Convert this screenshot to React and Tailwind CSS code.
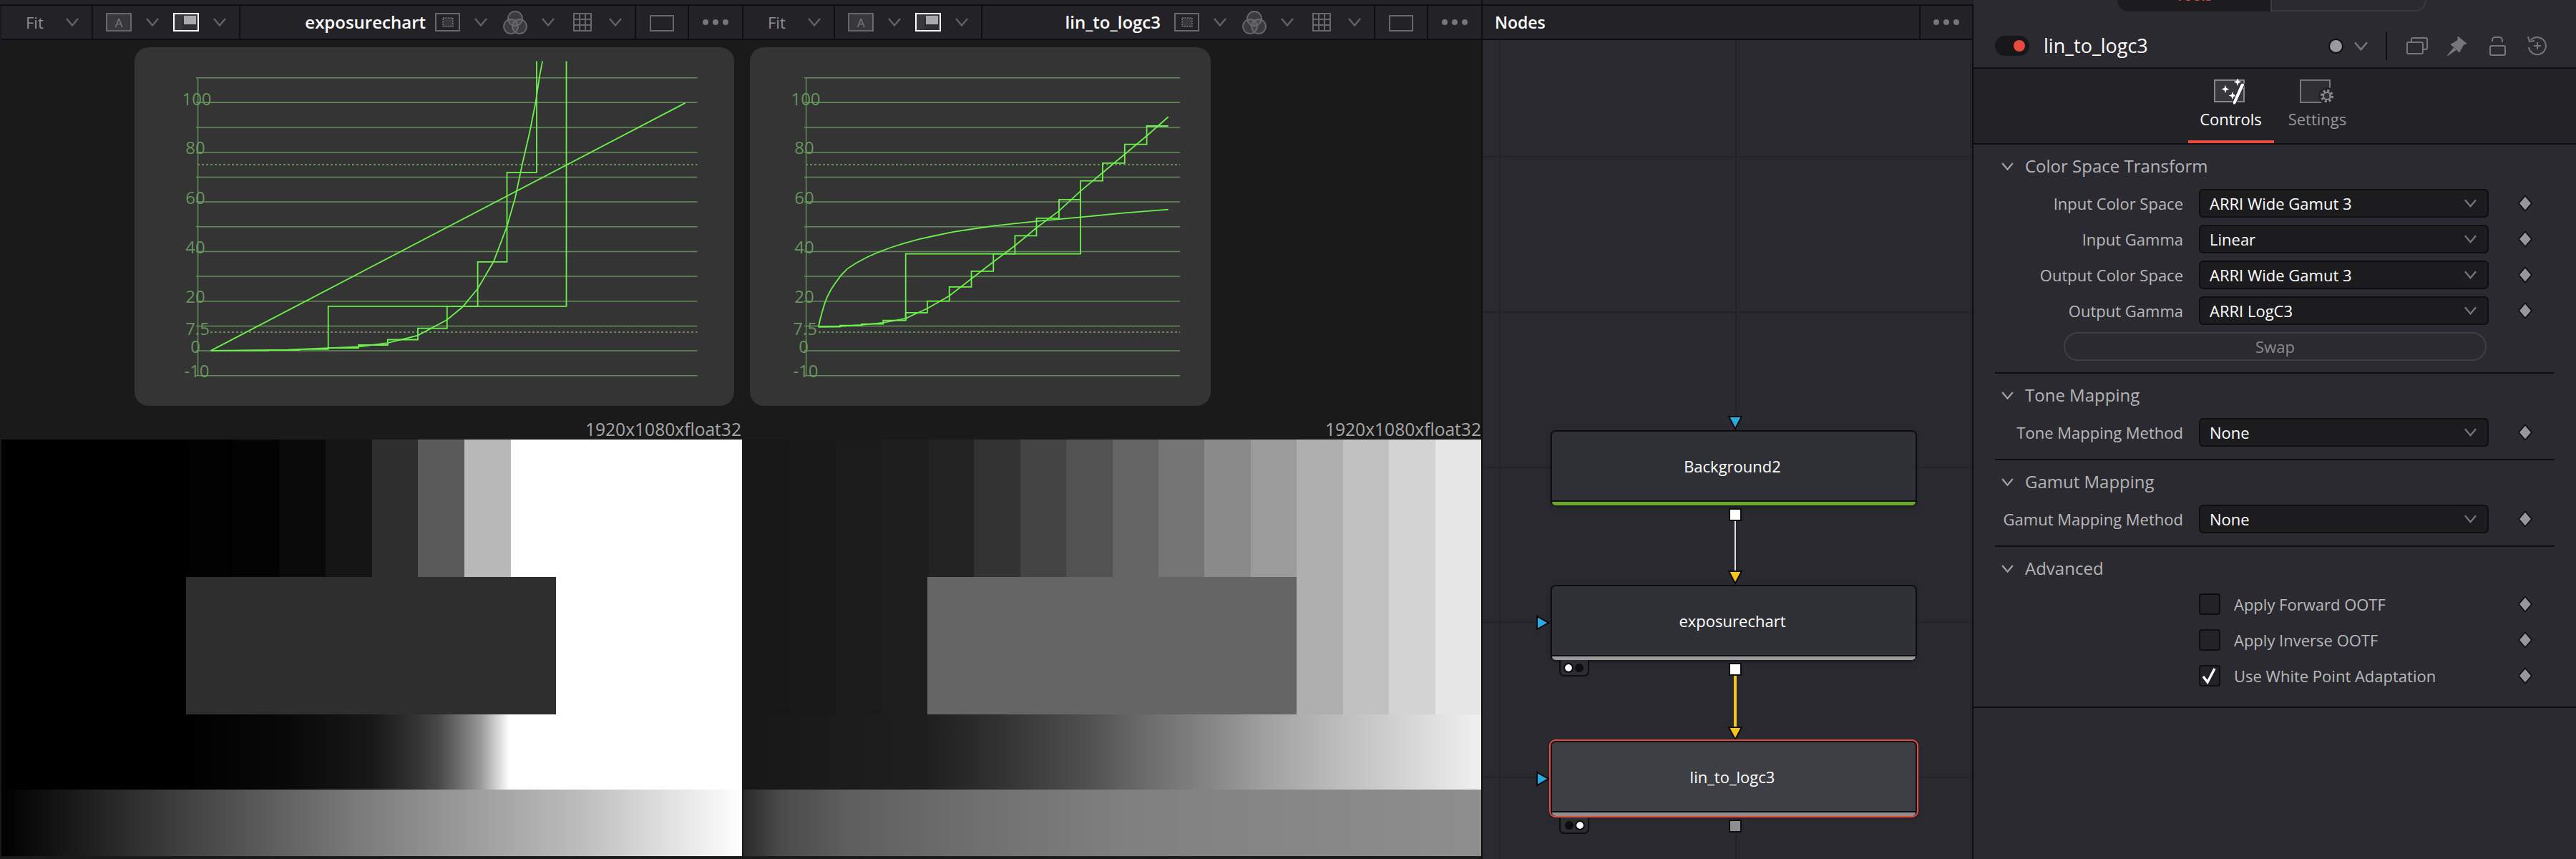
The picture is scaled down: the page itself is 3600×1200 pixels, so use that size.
import React from "react";

// scope traces are read off the chart at 1050px -> 1568px horizontal, 620px -> 1568px vertical
const sx = (x, offset = 0) => x / 1.4933 + offset;
const sy = (y) => y / 2.529;
const toPoints = (list, offset) =>
  list.map(([x, y]) => `${sx(x, offset).toFixed(1)},${sy(y).toFixed(1)}`).join(" ");

const GRID_YS = Array.from({ length: 13 }, (_, k) => 108.7 + k * 34.67);

const EXPOSURE_TRACES = [
  [[440, 1239], [1430, 364]],
  [[440, 1239], [560, 1239], [560, 1237], [625, 1237], [625, 1234], [685, 1234], [685, 1229], [748, 1229], [748, 1219], [809, 1219], [809, 1200], [872, 1200], [872, 1160], [933, 1160], [933, 1082], [997, 1082], [997, 925], [1058, 925], [1058, 609], [1120, 609], [1120, 216]],
  [[685, 1234], [685, 1082], [1182, 1082], [1182, 216]],
  [[440, 1239], [600, 1236], [748, 1225], [809, 1212], [872, 1185], [933, 1130], [965, 1085], [997, 1020], [1030, 925], [1058, 800], [1075, 700], [1090, 580], [1105, 470], [1118, 360], [1126, 270], [1132, 216]],
];

const LOGC_TRACES = [
  [[170, 1155], [215, 1153], [260, 1148], [305, 1140], [352, 1125], [397, 1090], [443, 1045], [489, 985], [535, 925], [580, 868], [625, 805], [672, 745], [717, 675], [763, 610], [809, 545], [855, 480], [900, 413]],
  [[170, 1155], [215, 1155], [215, 1150], [260, 1150], [260, 1145], [305, 1145], [305, 1132], [352, 1132], [352, 1105], [397, 1105], [397, 1064], [443, 1064], [443, 1014], [489, 1014], [489, 958], [535, 958], [535, 897], [580, 897], [580, 833], [625, 833], [625, 771], [672, 771], [672, 705], [717, 705], [717, 639], [763, 639], [763, 576], [809, 576], [809, 510], [855, 510], [855, 445], [900, 445]],
  [[352, 1132], [352, 897], [717, 897], [717, 705]],
  [[170, 1155], [174, 1125], [178, 1100], [183, 1072], [188, 1050], [196, 1023], [205, 1000], [217, 973], [230, 950], [248, 930], [270, 910], [295, 891], [320, 875], [350, 859], [380, 845], [415, 832], [450, 820], [495, 808], [540, 797], [625, 782], [717, 767], [810, 752], [900, 740]],
];

const EXPOSURE_LABELS = [
  ["100", 275, 138], ["80", 273, 206], ["60", 273, 276], ["40", 273, 345], ["20", 273, 414],
  ["7.5", 276, 459], ["0", 273, 484], ["-10", 275, 518],
];

const LOGC_LABELS = [
  ["100", 1126, 138], ["80", 1124, 206], ["60", 1124, 276], ["40", 1124, 345], ["20", 1124, 414],
  ["7.5", 1125, 459], ["0", 1123, 484], ["-10", 1126, 518],
];

const EXPOSURE_STRIPS = [
  "bg-[#000000]", "bg-[#000000]", "bg-[#000000]", "bg-[#000000]", "bg-[#010101]", "bg-[#030303]",
  "bg-[#0a0a0a]", "bg-[#151515]", "bg-[#2e2e2e]", "bg-[#5a5a5a]", "bg-[#b9b9b9]", "bg-white",
  "bg-white", "bg-white", "bg-white", "bg-white",
];

const LOGC_STRIPS = [
  "bg-[#171717]", "bg-[#191919]", "bg-[#1b1b1b]", "bg-[#1e1e1e]", "bg-[#222222]", "bg-[#333333]",
  "bg-[#434343]", "bg-[#525252]", "bg-[#646464]", "bg-[#757575]", "bg-[#8a8a8a]", "bg-[#9b9b9b]",
  "bg-[#afafaf]", "bg-[#c1c1c1]", "bg-[#d3d3d3]", "bg-[#e6e6e6]",
];

function Chevron({ className = "w-[18px] h-[12px]", color = "#626266" }) {
  return (
    <svg viewBox="0 0 18 12" className={className} fill="none" stroke={color} strokeWidth="2.4">
      <polyline points="1,1 9,10.5 17,1" />
    </svg>
  );
}

function Dots() {
  return (
    <div className="flex gap-[6px]">
      <div className="w-[8px] h-[8px] rounded-full bg-[#77777b]" />
      <div className="w-[8px] h-[8px] rounded-full bg-[#77777b]" />
      <div className="w-[8px] h-[8px] rounded-full bg-[#77777b]" />
    </div>
  );
}

function ViewerToolbar({ title, titleGap }) {
  return (
    <div className="h-[46px] flex bg-[#222227] text-[#8f8f92]">
      <div className="w-[128px] shrink-0 border-r-2 border-[#0e0e10] flex items-center pl-[34px]">
        <span className="text-[22px] w-[56px]">Fit</span>
        <Chevron />
      </div>
      <div className="w-[206px] shrink-0 border-r-2 border-[#0e0e10] flex items-center pl-[18px]">
        <div className="w-[36px] h-[26px] border-2 border-[#68686c] bg-[#38383c] flex items-center justify-center text-[17px] leading-none text-[#7c7c80]">
          A
        </div>
        <div className="ml-[20px]">
          <Chevron />
        </div>
        <div className="ml-[20px] w-[36px] h-[26px] border-2 border-white bg-[#3a3a3e] relative">
          <div className="absolute right-0 bottom-0 w-[22px] h-[16px] bg-[#2f2f34]" />
          <div className="absolute right-[2px] top-[2px] w-[17px] h-[12px] bg-[#a9a9ab]" />
        </div>
        <div className="ml-[20px]">
          <Chevron />
        </div>
      </div>
      <div className="flex-1 flex items-center justify-end min-w-0" style={{ paddingRight: titleGap }}>
        <span className="text-[24px] font-semibold text-white">{title}</span>
      </div>
      <div className="w-[429px] shrink-0 flex items-center">
        <div className="w-[281px] shrink-0 border-r-2 border-[#0e0e10] h-full flex items-center">
          <svg viewBox="0 0 35 26" className="w-[35px] h-[26px]" fill="none">
            <rect x="1" y="1" width="33" height="24" stroke="#68686c" strokeWidth="2" />
            <rect x="11" y="7" width="14" height="12" fill="#38383c" stroke="#77777b" strokeWidth="1.5" strokeDasharray="2 1.5" />
          </svg>
          <div className="ml-[20px]">
            <Chevron />
          </div>
          <svg viewBox="0 0 34 33" className="ml-[22px] w-[34px] h-[33px]" fill="#68686c" fillOpacity="0.35" stroke="#68686c" strokeWidth="1.8">
            <circle cx="17" cy="11" r="10" />
            <circle cx="11" cy="22" r="10" />
            <circle cx="23" cy="22" r="10" />
          </svg>
          <div className="ml-[20px]">
            <Chevron />
          </div>
          <svg viewBox="0 0 26 26" className="ml-[26px] w-[26px] h-[26px]" fill="none" stroke="#68686c" strokeWidth="2">
            <rect x="1" y="1" width="24" height="24" />
            <line x1="9" y1="1" x2="9" y2="25" />
            <line x1="17" y1="1" x2="17" y2="25" />
            <line x1="1" y1="9" x2="25" y2="9" />
            <line x1="1" y1="17" x2="25" y2="17" />
          </svg>
          <div className="ml-[24px]">
            <Chevron />
          </div>
        </div>
        <div className="w-[74px] shrink-0 border-r-2 border-[#0e0e10] h-full flex items-center justify-center">
          <div className="w-[34px] h-[23px] border-2 border-[#68686c] mt-[2px]" />
        </div>
        <div className="flex-1 flex items-center justify-center">
          <Dots />
        </div>
      </div>
    </div>
  );
}

function Scope({ viewBox, lineFrom, lineTo, lowerDotFrom, labels, traces, offset }) {
  return (
    <svg viewBox={viewBox} className="w-full h-full">
      {GRID_YS.map((y) => (
        <line key={y} x1={lineFrom} x2={lineTo} y1={y} y2={y} stroke="#648f5b" strokeWidth="1.5" />
      ))}
      <line x1={lineFrom + 2.6} x2={lineFrom + 2.6} y1={108} y2={525} stroke="#648f5b" strokeWidth="1.5" />
      <line x1={lineFrom + 2} x2={lineTo} y1={230} y2={230} stroke="#648f5b" strokeWidth="2" strokeDasharray="3 3" />
      <line x1={lowerDotFrom} x2={lineTo} y1={464} y2={464} stroke="#648f5b" strokeWidth="2" strokeDasharray="3 3" />
      {labels.map(([text, x, y]) => (
        <text key={text} x={x} y={y + 9} textAnchor="middle" fontSize="24" fill="#6b9b62" fillOpacity="0.95">
          {text}
        </text>
      ))}
      {traces.map((trace, i) => (
        <polyline key={i} points={toPoints(trace, offset)} fill="none" stroke="#6cf04c" strokeWidth="1.8" />
      ))}
    </svg>
  );
}

function GrayImage({ strips, boxLeft, boxWidth, boxClass, middleClass, bottomClass }) {
  return (
    <div className="flex flex-col">
      <div className="relative h-[384px] flex">
        {strips.map((c, i) => (
          <div key={i} className={`flex-1 ${c}`} />
        ))}
        <div className={`absolute top-[192px] h-[192px] ${boxLeft} ${boxWidth} ${boxClass}`} />
      </div>
      <div className={`h-[105px] ${middleClass}`} />
      <div className={`h-[93px] ${bottomClass}`} />
    </div>
  );
}

function Triangle({ dir, color, className }) {
  const points = dir === "down" ? "2,2 20,2 11,19" : "2,2 2,20 18,11";
  const box = dir === "down" ? "0 0 22 21" : "0 0 20 22";
  return (
    <svg viewBox={box} className={className}>
      <polygon points={points} fill={color} stroke="#0b0b0d" strokeWidth="2" strokeLinejoin="miter" />
    </svg>
  );
}

function FlowNode({ label, top, stripe, bg = "bg-[#2f3036]", selected }) {
  return (
    <div
      className={`absolute left-[95px] w-[512px] h-[105px] rounded-[7px] border-2 border-b-0 border-[#0e0e10] ${bg} flex flex-col shadow-[0_2px_4px_rgba(0,0,0,0.4)] ${top} ${
        selected ? "outline-2 outline-offset-[0px] outline-[#e64b3d]" : ""
      }`}
    >
      <div className="flex-1 flex items-center justify-center text-[22px] text-white">
        <span className="-translate-x-[2px]">{label}</span>
      </div>
      <div className={`h-[7px] border-t-2 border-[#0e0e10] rounded-b-[5px] ${stripe}`} />
    </div>
  );
}

function NodeBadge({ top, whiteFirst }) {
  const white = <div className="w-[10px] h-[10px] rounded-full bg-white outline-2 outline-[#0e0e10]" />;
  const black = <div className="w-[12px] h-[12px] rounded-full bg-[#0e0e10]" />;
  return (
    <div
      className={`absolute left-[107px] w-[42px] h-[23px] rounded-b-[7px] bg-[#2c2d32] border-2 border-t-0 border-[#0e0e10] flex items-center justify-center gap-[4px] ${top}`}
    >
      {whiteFirst ? white : black}
      {whiteFirst ? black : white}
    </div>
  );
}

function NodesPanel() {
  return (
    <div className="w-[686px] shrink-0 flex flex-col border-r-2 border-[#0e0e10]">
      <div className="h-[46px] flex bg-[#222227]">
        <div className="flex-1 border-r-2 border-[#0e0e10] flex items-center pl-[17px] text-[23px] font-semibold text-white">
          Nodes
        </div>
        <div className="w-[72px] flex items-center justify-center">
          <Dots />
        </div>
      </div>
      <div className="h-[2px] bg-[#0e0e10]" />
      <div className="relative flex-1 bg-[#29292f] overflow-hidden">
        {/* canvas grid, the node graph sits on it */}
        <div className="absolute left-[23px] top-0 bottom-0 w-[2px] bg-[#232328]" />
        <div className="absolute left-[353px] top-0 bottom-0 w-[2px] bg-[#232328]" />
        <div className="absolute left-[681px] top-0 bottom-0 w-[2px] bg-[#232328]" />
        <div className="absolute left-0 right-0 top-[162px] h-[2px] bg-[#232328]" />
        <div className="absolute left-0 right-0 top-[379px] h-[2px] bg-[#232328]" />
        <div className="absolute left-0 right-0 top-[596px] h-[2px] bg-[#232328]" />
        <div className="absolute left-0 right-0 top-[812px] h-[2px] bg-[#232328]" />
        <div className="absolute left-0 right-0 top-[1029px] h-[2px] bg-[#232328]" />

        <div className="absolute left-[352px] top-[671px] w-[2px] h-[72px] bg-[#e2e2e4]" />
        <div className="absolute left-[351px] top-[887px] w-[4px] h-[72px] bg-[#f5c518]" />

        <Triangle dir="down" color="#29abe2" className="absolute left-[342px] top-[524px] w-[22px] h-[21px]" />
        <Triangle dir="down" color="#f5c518" className="absolute left-[342px] top-[740px] w-[22px] h-[21px]" />
        <Triangle dir="down" color="#f5c518" className="absolute left-[342px] top-[958px] w-[22px] h-[21px]" />
        <Triangle dir="right" color="#29abe2" className="absolute left-[74px] top-[803px] w-[20px] h-[22px]" />
        <Triangle dir="right" color="#29abe2" className="absolute left-[74px] top-[1021px] w-[20px] h-[22px]" />

        <FlowNode label="Background2" top="top-[545px]" stripe="bg-[#6da82a]" />
        <FlowNode label="exposurechart" top="top-[761px]" stripe="bg-[#9a9a9a]" />
        <FlowNode label="lin_to_logc3" top="top-[979px]" stripe="bg-[#8f8f8f]" bg="bg-[#3d3f44]" selected />

        <div className="absolute left-[344px] top-[654px] w-[18px] h-[18px] bg-white border-2 border-[#0e0e10]" />
        <div className="absolute left-[344px] top-[870px] w-[18px] h-[18px] bg-white border-2 border-[#0e0e10]" />
        <div className="absolute left-[344px] top-[1089px] w-[18px] h-[18px] bg-[#8e8e8e] border-2 border-[#0e0e10]" />

        <NodeBadge top="top-[866px]" whiteFirst />
        <NodeBadge top="top-[1086px]" />
      </div>
    </div>
  );
}

function Diamond() {
  return (
    <svg viewBox="0 0 22 24" className="w-[22px] h-[24px]">
      <polygon points="11,1.5 20,12 11,22.5 2,12" fill="#96969c" stroke="#0b0b0d" strokeWidth="1.6" />
    </svg>
  );
}

function SectionTitle({ children }) {
  return (
    <div className="h-[60px] flex items-center pl-[39px]">
      <Chevron className="w-[17px] h-[11px]" color="#a5a5a8" />
      <span className="ml-[16px] text-[24px] text-[#b4b4b6]">{children}</span>
    </div>
  );
}

function SelectRow({ label, value }) {
  return (
    <div className="h-[40px] mb-[10px] flex items-center">
      <div className="w-[293px] text-right text-[22px] text-[#b9b9bb]">{label}</div>
      <div className="ml-[22px] w-[405px] h-[40px] rounded-[6px] border-2 border-[#0e0e10] bg-[#1c1c1f] flex items-center justify-between pl-[13px] pr-[15px]">
        <span className="text-[22px] text-white">{value}</span>
        <Chevron className="w-[17px] h-[12px]" color="#77777b" />
      </div>
      <div className="ml-[40px]">
        <Diamond />
      </div>
    </div>
  );
}

function CheckRow({ label, checked }) {
  return (
    <div className="h-[50px] flex items-center pl-[315px]">
      <div className="relative w-[30px] h-[30px] rounded-[4px] border-2 border-[#0e0e10] bg-[#232327]">
        {checked && (
          <svg viewBox="0 0 24 24" className="absolute left-[1px] top-[1px] w-[24px] h-[24px]" fill="none" stroke="white" strokeWidth="3.4">
            <polyline points="3,13 9,21 19,2" />
          </svg>
        )}
      </div>
      <span className="ml-[19px] w-[396px] text-[22px] text-[#b9b9bb]">{label}</span>
      <Diamond />
    </div>
  );
}

function Divider() {
  return <div className="mx-[30px] h-[2px] bg-[#0e0e10]" />;
}

function Inspector() {
  return (
    <div className="flex-1 flex flex-col bg-[#2a2a30]">
      <div className="h-[94px] flex flex-col">
        <div className="ml-[201px] w-[432px] h-[16px] flex text-[20px] overflow-hidden">
          <div className="w-[216px] rounded-bl-[18px] bg-[#1c1c1f] text-[#e64b3d] border-r-2 border-[#3a3a40] text-center leading-none">
            <div className="-mt-[16px] font-semibold">Tools</div>
          </div>
          <div className="w-[216px] rounded-br-[18px] border-b-2 border-r-2 border-[#3a3a40] text-[#77777b] text-center">
            <div className="-mt-[24px]">Modifiers</div>
          </div>
        </div>
        <div className="flex-1 flex items-center pl-[30px] pt-[18px]">
          <div className="w-[48px] h-[28px] rounded-full bg-[#17171a] flex items-center justify-end pr-[6px]">
            <div className="w-[16px] h-[16px] rounded-full bg-[#e64b3d]" />
          </div>
          <span className="ml-[20px] text-[27px] text-white">lin_to_logc3</span>
          <div className="ml-auto flex items-center pr-[41px]">
            <div className="w-[21px] h-[21px] rounded-full bg-[#9a9a9c] border-2 border-[#0e0e10]" />
            <div className="ml-[15px]">
              <Chevron className="w-[19px] h-[13px]" color="#77777b" />
            </div>
            <div className="ml-[25px] w-[2px] h-[40px] bg-[#0e0e10]" />
            <svg viewBox="0 0 30 24" className="ml-[27px] w-[30px] h-[24px]" fill="none" stroke="#77777b" strokeWidth="2">
              <rect x="1" y="7" width="22" height="16" rx="2" />
              <path d="M7 7V3a2 2 0 0 1 2-2h18a2 2 0 0 1 2 2v12a2 2 0 0 1-2 2h-4" />
            </svg>
            <svg viewBox="0 0 29 29" className="ml-[26px] w-[29px] h-[29px]" fill="#77777b" stroke="#77777b" strokeWidth="1">
              <path d="M16 1 L28 11 L24 12 L20 19 L18 23 L6 12 L10 10 L16 6 Z" />
              <path d="M10 17 L1 28 L13 20 Z" />
            </svg>
            <svg viewBox="0 0 25 27" className="ml-[30px] w-[25px] h-[27px]" fill="none" stroke="#77777b" strokeWidth="2">
              <rect x="2" y="13" width="21" height="13" rx="2" />
              <path d="M5 7V5a4 4 0 0 1 4-4h6a4 4 0 0 1 4 4v3" />
            </svg>
            <svg viewBox="0 0 28 28" className="ml-[28px] w-[28px] h-[28px]" fill="none" stroke="#77777b" strokeWidth="2">
              <path d="M6 6a12 12 0 1 1-3 10" />
              <polyline points="2,1 4,8 11,7" />
              <line x1="15" y1="9" x2="15" y2="19" />
              <line x1="10" y1="14" x2="20" y2="14" />
            </svg>
          </div>
        </div>
      </div>
      <div className="h-[2px] bg-[#0e0e10]" />
      <div className="h-[104px] bg-[#232327] flex justify-center relative">
        <div className="w-[120px] h-full flex flex-col items-center pt-[14px] relative -ml-[14px]">
          <svg viewBox="0 0 48 38" className="w-[48px] h-[38px]" fill="none">
            <rect x="1" y="2" width="41" height="30" fill="#38383c" stroke="#88888c" strokeWidth="2" />
            <path d="M16 9 l1.5 4 4 1.5 -4 1.5 -1.5 4 -1.5 -4 -4 -1.5 4 -1.5z M26 18 l1.5 4 4 1.5 -4 1.5 -1.5 4 -1.5 -4 -4 -1.5 4 -1.5z M33 -1 l1.5 4 4 1.5 -4 1.5 -1.5 4 -1.5 -4 -4 -1.5 4 -1.5z" fill="white" />
            <path d="M43 8 L32 32 L30 36 L27 36 L26 33 L37 8 Q40 4 43 8Z" fill="white" stroke="#232327" strokeWidth="1" />
          </svg>
          <span className="mt-[3px] text-[22px] leading-[30px] text-white">Controls</span>
          <div className="absolute bottom-0 left-0 right-0 h-[4px] bg-[#e64b3d]" />
        </div>
        <div className="ml-[13px] w-[96px] h-full flex flex-col items-center pt-[14px]">
          <svg viewBox="0 0 50 38" className="w-[50px] h-[38px]" fill="none">
            <rect x="1" y="2" width="41" height="31" fill="#303034" stroke="#77777b" strokeWidth="2" />
            <circle cx="38" cy="24" r="8" stroke="#232327" strokeWidth="8" />
            <circle cx="38" cy="24" r="7" stroke="#88888c" strokeWidth="4" strokeDasharray="3 2.5" />
            <circle cx="38" cy="24" r="5" stroke="#88888c" strokeWidth="2" />
          </svg>
          <span className="mt-[3px] text-[22px] leading-[30px] text-[#97979a]">Settings</span>
        </div>
      </div>
      <div className="h-[2px] bg-[#0e0e10]" />

      <SectionTitle>Color Space Transform</SectionTitle>
      <div className="mt-[2px]">
        <SelectRow label="Input Color Space" value="ARRI Wide Gamut 3" />
        <SelectRow label="Input Gamma" value="Linear" />
        <SelectRow label="Output Color Space" value="ARRI Wide Gamut 3" />
        <SelectRow label="Output Gamma" value="ARRI LogC3" />
      </div>
      <div className="ml-[126px] w-[591px] h-[40px] rounded-full border-2 border-[#3e3f45] flex items-center justify-center text-[22px] text-[#8b8b8e]">
        Swap
      </div>
      <div className="h-[16px]" />
      <Divider />

      <SectionTitle>Tone Mapping</SectionTitle>
      <div className="mt-[2px] mb-[7px]">
        <SelectRow label="Tone Mapping Method" value="None" />
      </div>
      <Divider />

      <SectionTitle>Gamut Mapping</SectionTitle>
      <div className="mt-[2px] mb-[7px]">
        <SelectRow label="Gamut Mapping Method" value="None" />
      </div>
      <Divider />

      <SectionTitle>Advanced</SectionTitle>
      <div className="-mt-[5px] mb-[18px]">
        <CheckRow label="Apply Forward OOTF" />
        <CheckRow label="Apply Inverse OOTF" />
        <CheckRow label="Use White Point Adaptation" checked />
      </div>
      <div className="h-[2px] bg-[#0e0e10]" />
    </div>
  );
}

export default function App() {
  return (
    <div className="w-[3600px] h-[1200px] flex overflow-hidden bg-[#1a1a1a] font-['Open_Sans',sans-serif]">
      <div className="w-[2070px] shrink-0 flex flex-col">
        <div className="h-[6px] bg-[#232328]" />
        <div className="h-[2px] bg-[#0e0e10]" />
        <div className="flex-1 flex">
          {/* exposurechart viewer */}
          <div className="w-[1037px] shrink-0 pl-[2px] flex flex-col">
            <ViewerToolbar title="exposurechart" titleGap={13} />
            <div className="h-[2px] bg-[#0e0e10]" />
            <div className="h-[558px] pt-[10px] flex flex-col">
              <div className="ml-[186px] w-[838px] h-[501px] rounded-[20px] bg-[#343434]">
                <Scope
                  viewBox="188 66 838 501"
                  lineFrom={274}
                  lineTo={974.5}
                  lowerDotFrom={294}
                  labels={EXPOSURE_LABELS}
                  traces={EXPOSURE_TRACES}
                  offset={0}
                />
              </div>
              <div className="pr-[1px] text-right text-[24.6px] leading-[34px] mt-[16px] text-[#a8a8a8]">
                1920x1080xfloat32
              </div>
            </div>
            <GrayImage
              strips={EXPOSURE_STRIPS}
              boxLeft="left-[258px]"
              boxWidth="w-[517px]"
              boxClass="bg-[#2e2e2e]"
              middleClass="bg-[linear-gradient(90deg,#000_0%,#000_25%,#090909_39%,#181818_50%,#333_56%,#484848_59%,#6f6f6f_62%,#999_64.7%,#ddd_67.3%,#fff_68.6%,#fff_100%)]"
              bottomClass="bg-[linear-gradient(90deg,#000_0%,#444_26%,#7a7a7a_48%,#a0a0a0_65%,#bcbcbc_78%,#fff_100%)]"
            />
          </div>
          <div className="w-[2px] bg-[#0e0e10] h-[48px]" />
          {/* lin_to_logc3 viewer */}
          <div className="flex-1 min-w-0 flex flex-col">
            <ViewerToolbar title="lin_to_logc3" titleGap={19} />
            <div className="h-[2px] bg-[#0e0e10]" />
            <div className="h-[558px] pt-[10px] flex flex-col">
              <div className="ml-[9px] w-[644px] h-[501px] rounded-[20px] bg-[#343434]">
                <Scope
                  viewBox="1048 66 644 501"
                  lineFrom={1124}
                  lineTo={1649}
                  lowerDotFrom={1144}
                  labels={LOGC_LABELS}
                  traces={LOGC_TRACES}
                  offset={1030}
                />
              </div>
              <div className="text-right text-[24.6px] leading-[34px] mt-[16px] text-[#a8a8a8]">
                1920x1080xfloat32
              </div>
            </div>
            <GrayImage
              strips={LOGC_STRIPS}
              boxLeft="left-[257px]"
              boxWidth="w-[516px]"
              boxClass="bg-[#656565]"
              middleClass="bg-[linear-gradient(90deg,#171717_0%,#1f1f1f_25%,#303030_34%,#505050_46.7%,#6b6b6b_54.4%,#888_64%,#a0a0a0_70.6%,#c0c0c0_82%,#d5d5d5_90%,#eee_99%)]"
              bottomClass="bg-[linear-gradient(90deg,#2a2a2a_0%,#4a4a4a_5%,#5e5e5e_14%,#707070_32%,#808080_52%,#8e8e8e_100%)]"
            />
          </div>
        </div>
      </div>
      <div className="w-[2px] shrink-0 bg-[#0e0e10]" />
      <div className="shrink-0 flex flex-col">
        <div className="h-[6px] bg-[#232328]" />
        <div className="h-[2px] bg-[#0e0e10]" />
        <div className="flex-1 flex min-h-0">
          <NodesPanel />
        </div>
      </div>
      <Inspector />
    </div>
  );
}
